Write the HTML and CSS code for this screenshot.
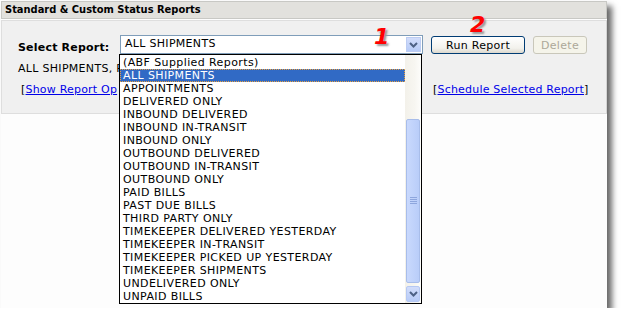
FILE: index.html
```html
<!DOCTYPE html>
<html lang="en">
<head>
    <meta charset="UTF-8">
    <title>Status Reports</title>
    <link rel="stylesheet" href="styles.css">
</head>
<body>

    <div class="frame">
        <div class="panel-title">Standard &amp; Custom Status Reports</div>

        <div class="panel-body">
            <div class="report-row">
                <label class="report-label">Select Report:</label>
                <div class="combo">
                    <span class="combo-value">ALL SHIPMENTS</span>
                    <span class="combo-arrow">
                        <svg width="9" height="6" viewBox="0 0 9 6"><path d="M1 1 L4.5 4.5 L8 1" fill="none" stroke="#4d6185" stroke-width="2"/></svg>
                    </span>
                </div>
                <button class="btn btn-run">Run Report</button>
                <button class="btn btn-delete" disabled>Delete</button>
            </div>
            <div class="report-desc">ALL SHIPMENTS, P</div>
            <div class="report-links">
                <span class="link-left">[<a href="#">Show Report Op</a></span>
                <span>[<a href="#">Schedule Selected Report</a>]</span>
            </div>
        </div>

        <!-- open select list, drawn over the form -->
        <div class="dropdown">
            <ul class="dropdown-list">
                <li>(ABF Supplied Reports)</li>
                <li class="selected">ALL SHIPMENTS</li>
                <li>APPOINTMENTS</li>
                <li>DELIVERED ONLY</li>
                <li>INBOUND DELIVERED</li>
                <li>INBOUND IN-TRANSIT</li>
                <li>INBOUND ONLY</li>
                <li>OUTBOUND DELIVERED</li>
                <li>OUTBOUND IN-TRANSIT</li>
                <li>OUTBOUND ONLY</li>
                <li>PAID BILLS</li>
                <li>PAST DUE BILLS</li>
                <li>THIRD PARTY ONLY</li>
                <li>TIMEKEEPER DELIVERED YESTERDAY</li>
                <li>TIMEKEEPER IN-TRANSIT</li>
                <li>TIMEKEEPER PICKED UP YESTERDAY</li>
                <li>TIMEKEEPER SHIPMENTS</li>
                <li>UNDELIVERED ONLY</li>
                <li>UNPAID BILLS</li>
            </ul>
            <div class="scrollbar">
                <div class="scroll-track">
                    <div class="scroll-thumb">
                        <svg width="7" height="8" viewBox="0 0 7 8"><path d="M0 0.5H7M0 2.5H7M0 4.5H7M0 6.5H7" stroke="#8ea6dd" stroke-width="1"/></svg>
                    </div>
                </div>
                <div class="scroll-btn">
                    <svg width="9" height="6" viewBox="0 0 9 6"><path d="M1 1 L4.5 4.5 L8 1" fill="none" stroke="#4d6185" stroke-width="2"/></svg>
                </div>
            </div>
        </div>

        <span class="step step-1">1</span>
        <span class="step step-2">2</span>
    </div>

</body>
</html>
```

FILE: styles.css
```css
body {
    margin: 0;
    background: #ffffff;
    font-family: "DejaVu Sans", Verdana, sans-serif;
    font-size: 11px;
    letter-spacing: 0.3px;
    color: #000;
}
.frame {
    position: relative;
    width: 606px;
    height: 307px;
    margin: 1px 0 0 1px;
    background: #fdfdfd;
    box-shadow: 5px 5px 6px rgba(0, 0, 0, 0.6);
}
.panel-title {
    height: 16px;
    line-height: 16px;
    padding-left: 3px;
    background: #e2e1dd;
    border: 1px solid #c8c8c4;
    margin-bottom: 1px;
    font-family: "DejaVu Sans Condensed", "DejaVu Sans", sans-serif;
    font-weight: bold;
    font-size: 11px;
    letter-spacing: 0;
}
.panel-body {
    height: 78px;
    padding: 14px 0 0 16px;
    background: #f0f0f0;
    border: 1px solid #dedede;
    border-right-color: #d4d4d4;
    width: 588px;
}
.report-row {
    display: flex;
    align-items: flex-start;
}
.report-label {
    width: 102px;
    padding-top: 6px;
    font-weight: bold;
    font-size: 11px;
    letter-spacing: 0.2px;
    line-height: 13px;
}
.combo {
    position: relative;
    width: 303px;
    height: 19px;
    box-sizing: border-box;
    border: 1px solid #7f9db9;
    background: #fff;
}
.combo-value {
    display: block;
    padding-left: 4px;
    line-height: 16px;
}
.combo-arrow {
    position: absolute;
    right: 1px;
    top: 1px;
    width: 15px;
    height: 15px;
    box-sizing: border-box;
    background: linear-gradient(#d2ddfb, #b7cbf7);
    border: 1px solid #bcccf2;
    display: flex;
    align-items: center;
    justify-content: center;
}
.btn {
    height: 18px;
    margin-top: 1px;
    padding: 0;
    font-family: "DejaVu Sans", Verdana, sans-serif;
    font-size: 11px;
    letter-spacing: 0.3px;
    border-radius: 3px;
}
.btn-run {
    width: 94px;
    margin-left: 8px;
    border: 1px solid #003c74;
    background: linear-gradient(#ffffff, #f2f1ec 70%, #dcd8cd);
    color: #000;
}
.btn-delete {
    width: 54px;
    margin-left: 8px;
    border: 1px solid #c9c7ba;
    background: #f5f4ea;
    color: #aca899;
}
.report-desc {
    margin-top: 8px;
    line-height: 13px;
    white-space: nowrap;
}
.report-links {
    display: flex;
    margin-top: 8px;
    padding-left: 3px;
    line-height: 13px;
    letter-spacing: 0.2px;
}
.link-left {
    width: 412px;
    white-space: nowrap;
}
.report-links a {
    color: #0000e8;
}
.dropdown {
    position: absolute;
    left: 118px;
    top: 53px;
    width: 303px;
    height: 250px;
    box-sizing: border-box;
    border: 1px solid #000;
    background: #fff;
    display: flex;
}
.dropdown-list {
    flex: 1;
    list-style: none;
    margin: 0;
    padding: 1px 0 0;
    letter-spacing: 0.4px;
}
.dropdown-list li {
    height: 13px;
    line-height: 13px;
    padding-left: 3px;
    white-space: nowrap;
}
.dropdown-list li.selected {
    background: #316ac5;
    color: #fff;
    outline: 1px dotted #e8a040;
    outline-offset: -1px;
}
.scrollbar {
    width: 16px;
    display: flex;
    flex-direction: column;
    background: linear-gradient(90deg, #f3f1ea, #f7f6f1 60%, #fdfdfb);
}
.scroll-track {
    flex: 1;
    padding-top: 64px;
}
.scroll-thumb {
    height: 164px;
    margin: 0 1px;
    box-sizing: border-box;
    border: 1px solid #a8bdea;
    border-radius: 2px;
    background: linear-gradient(90deg, #c9d9fd, #b9cdf9);
    display: flex;
    align-items: center;
    justify-content: center;
}
.scroll-btn {
    height: 16px;
    margin: 1px;
    box-sizing: border-box;
    border: 1px solid #b5c8f3;
    border-radius: 2px;
    background: linear-gradient(#d2ddfb, #b7cbf7);
    display: flex;
    align-items: center;
    justify-content: center;
}
.step {
    position: absolute;
    font-family: "DejaVu Sans", sans-serif;
    font-weight: bold;
    font-style: italic;
    font-size: 22px;
    line-height: 22px;
    color: #ff0000;
    text-shadow: 2px 2px 2px #999;
}
.step-1 {
    left: 373px;
    top: 25px;
}
.step-2 {
    left: 469px;
    top: 13px;
}
```
